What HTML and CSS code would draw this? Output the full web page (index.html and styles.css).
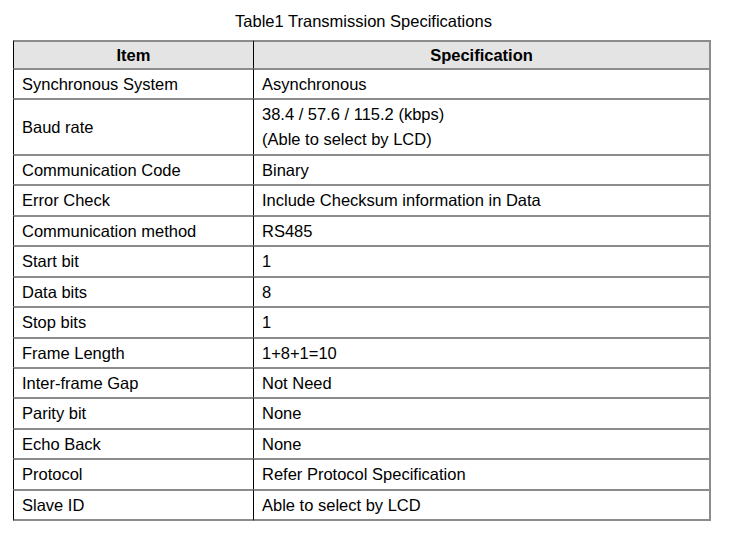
FILE: index.html
```html
<!DOCTYPE html>
<html>
<head>
<meta charset="utf-8">
<link rel="stylesheet" href="styles.css">
</head>
<body>
<div class="page">
  <div class="caption">Table1 Transmission Specifications</div>
  <table class="spec">
    <colgroup><col class="c1"><col class="c2"></colgroup>
    <thead>
      <tr><th>Item</th><th>Specification</th></tr>
    </thead>
    <tbody>
      <tr><td>Synchronous System</td><td>Asynchronous</td></tr>
      <tr><td>Baud rate</td><td>38.4 / 57.6 / 115.2 (kbps)<br>(Able to select by LCD)</td></tr>
      <tr><td>Communication Code</td><td>Binary</td></tr>
      <tr><td>Error Check</td><td>Include Checksum information in Data</td></tr>
      <tr><td>Communication method</td><td>RS485</td></tr>
      <tr><td>Start bit</td><td>1</td></tr>
      <tr><td>Data bits</td><td>8</td></tr>
      <tr><td>Stop bits</td><td>1</td></tr>
      <tr><td>Frame Length</td><td>1+8+1=10</td></tr>
      <tr><td>Inter-frame Gap</td><td>Not Need</td></tr>
      <tr><td>Parity bit</td><td>None</td></tr>
      <tr><td>Echo Back</td><td>None</td></tr>
      <tr><td>Protocol</td><td>Refer Protocol Specification</td></tr>
      <tr><td>Slave ID</td><td>Able to select by LCD</td></tr>
    </tbody>
  </table>
</div>
</body>
</html>
```

FILE: styles.css
```css
html, body {
  margin: 0;
  padding: 0;
  background: #fff;
}
body {
  font-family: "Liberation Sans", Arial, sans-serif;
  font-size: 16.5px;
  color: #000;
}
.page {
  width: 698px;
  margin-left: 13px;
}
.caption {
  text-align: center;
  line-height: 20px;
  padding-top: 11px;
  padding-bottom: 9px;
  margin-left: 3px;
}
.spec {
  width: 698px;
  table-layout: fixed;
  border-collapse: separate;
  border-spacing: 0;
}
.c1 { width: 240px; }
.c2 { width: 458px; }
.spec th,
.spec td {
  text-align: left;
  vertical-align: middle;
  line-height: 25px;
  padding: 2px 8px 1.44px 8px;
  border-top: 2px solid #8c8c8c;
  border-left: 1px solid #000;
  font-weight: normal;
}
.spec th {
  background: #e4e4e4;
  font-weight: bold;
  text-align: center;
  padding: 0.5px 8px;
}
.spec th:last-child,
.spec td:last-child {
  border-right: 2px solid #8c8c8c;
}
.spec tbody tr:last-child td {
  border-bottom: 2px solid #8c8c8c;
}
```
